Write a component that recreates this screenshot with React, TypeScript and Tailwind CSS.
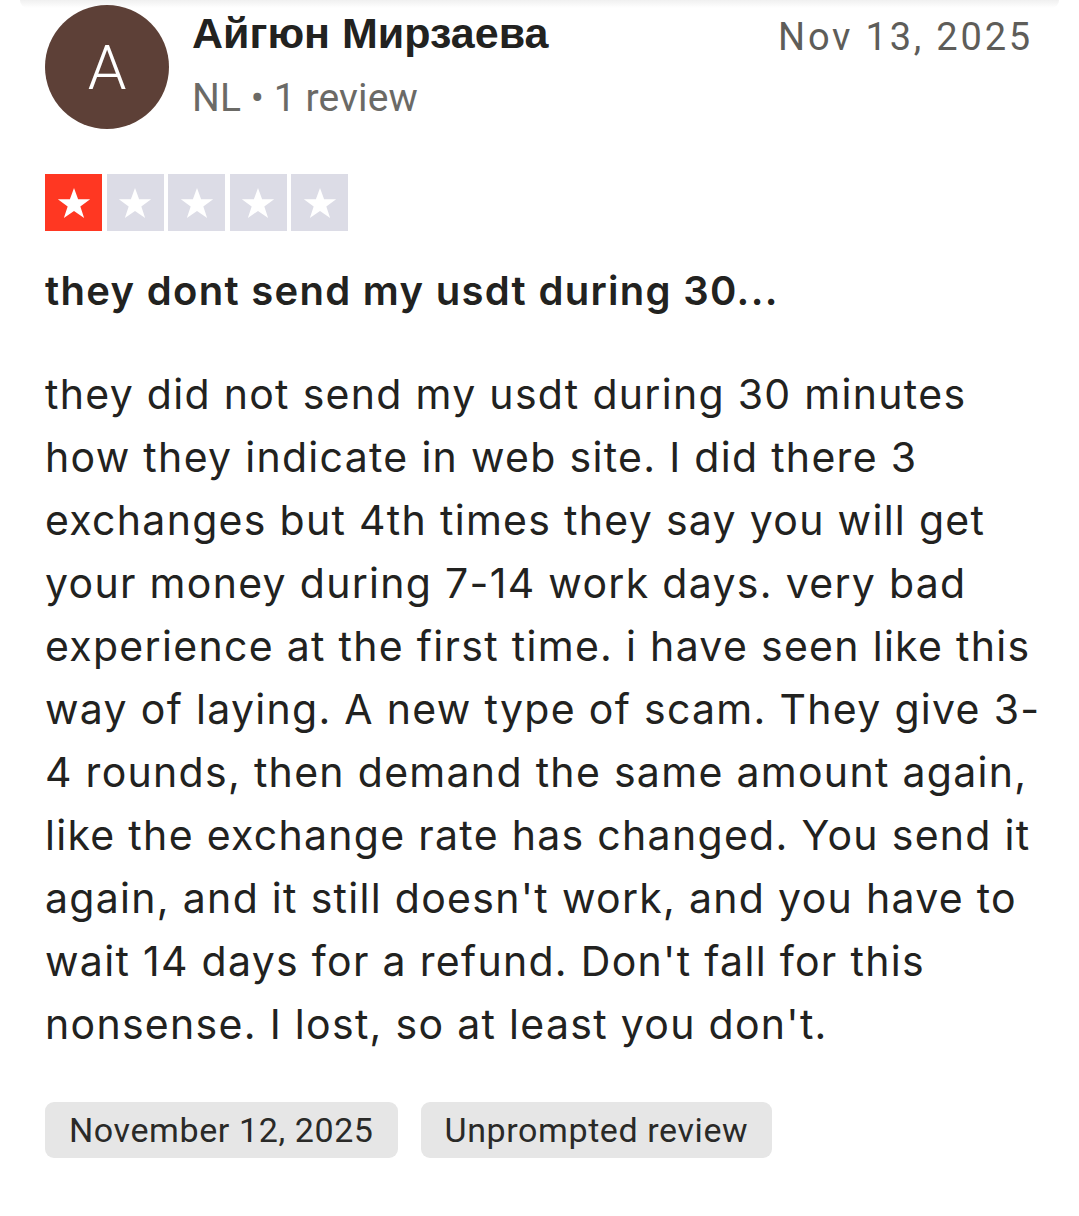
import React from "react";

const lines = [
  "they did not send my usdt during 30 minutes",
  "how they indicate in web site. I did there 3",
  "exchanges but 4th times they say you will get",
  "your money during 7-14 work days. very bad",
  "experience at the first time. i have seen like this",
  "way of laying. A new type of scam. They give 3-",
  "4 rounds, then demand the same amount again,",
  "like the exchange rate has changed. You send it",
  "again, and it still doesn't work, and you have to",
  "wait 14 days for a refund. Don't fall for this",
  "nonsense. I lost, so at least you don't.",
];

function Star() {
  return (
    <svg viewBox="0 0 24 24" className="w-[38px] h-[38px]">
      <path d="M12 2.5l2.6 7.2h7.6l-6.2 4.5 2.4 7.3L12 17l-6.4 4.5L8 14.2 1.8 9.7h7.6z" fill="#ffffff" />
    </svg>
  );
}

export default function App() {
  return (
    <div className="w-[1079px] h-[1216px] bg-white relative overflow-hidden" style={{ fontFamily: "Inter, 'Noto Sans', sans-serif" }}>
      <div className="h-[8px] mx-[20px] bg-gradient-to-b from-[#f0f0f0] to-white rounded-b-[8px]" />
      <div className="pl-[45px] pr-[46px]">
        <div className="flex items-start -mt-[3px]">
          <div className="w-[124px] h-[124px] rounded-full bg-[#5d4037] flex items-center justify-center text-white text-[62px] font-light shrink-0" style={{ fontFamily: "Roboto, sans-serif" }}>
            A
          </div>
          <div className="ml-[23px] flex-1 flex justify-between">
            <div>
              <div className="text-[43px] font-bold text-[#222220] leading-[50px] mt-[3px]" style={{ fontFamily: "'Liberation Sans', Arial, sans-serif" }}>Айгюн Мирзаева</div>
              <div className="text-[39px] text-[#6b6a66] leading-[50px] mt-[15px] tracking-[0.1px]" style={{ fontFamily: "Roboto, sans-serif" }}>NL • 1 review</div>
            </div>
            <div className="text-[38px] text-[#5e5d59] leading-[50px] mt-[7px] tracking-[2.8px]" style={{ fontFamily: "Roboto, sans-serif" }}>
              Nov 13, 2025
            </div>
          </div>
        </div>

        <div className="flex gap-[4.5px] mt-[45px]">
          <div className="w-[57px] h-[57px] bg-[#ff3722] flex items-center justify-center"><Star /></div>
          {[0, 1, 2, 3].map((i) => (
            <div key={i} className="w-[57px] h-[57px] bg-[#dcdce6] flex items-center justify-center"><Star /></div>
          ))}
        </div>

        <div className="mt-[36px] text-[40px] font-semibold text-[#222220] leading-[48px] tracking-[1.3px]">they dont send my usdt during 30...</div>

        <div className="mt-[48px] text-[41px] text-[#222220] leading-[63px] tracking-[1.3px]">
          {lines.map((l, i) => (
            <div key={i} className="whitespace-nowrap">{l}</div>
          ))}
        </div>

        <div className="flex gap-[23px] mt-[46px]" style={{ fontFamily: "Roboto, sans-serif" }}>
          <div className="h-[56px] px-[24px] rounded-[9px] bg-[#e6e6e6] text-[#2a2a28] text-[34px] flex items-center tracking-[0.6px]">November 12, 2025</div>
          <div className="h-[56px] px-[24px] rounded-[9px] bg-[#e6e6e6] text-[#2a2a28] text-[34px] flex items-center tracking-[0.6px]">Unprompted review</div>
        </div>
      </div>
    </div>
  );
}
